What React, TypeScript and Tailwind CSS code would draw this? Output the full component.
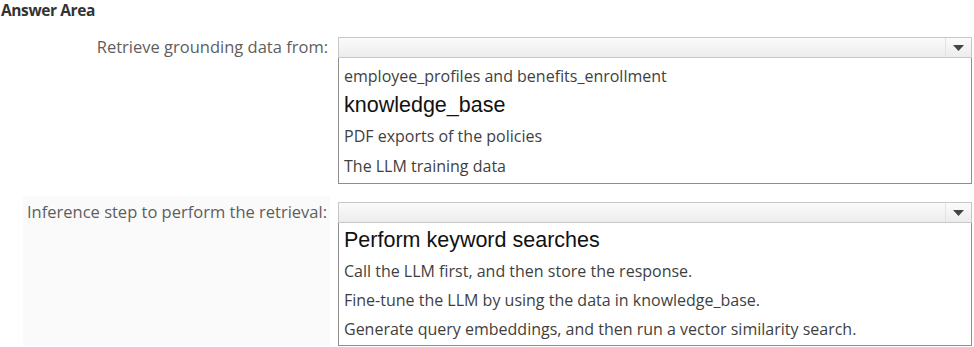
interface DropdownProps {
  items: { text: string; big?: boolean }[];
  listClass?: string;
  rowClass: string;
  bigRowClass: string;
}

function Dropdown({ items, listClass, rowClass, bigRowClass }: DropdownProps) {
  return (
    <div className="flex-1">
      <div className="flex h-[21px] border border-[#c8c8c8] bg-gradient-to-b from-[#fbfbfb] to-[#ececec]">
        <div className="flex-1" />
        <div className="flex w-[26px] items-center justify-center border-l border-[#e2e2e2]">
          <svg width="11" height="6" viewBox="0 0 11 6">
            <path d="M0 0h11L5.5 6z" fill="#444" />
          </svg>
        </div>
      </div>
      <div className={`border border-t-0 border-[#8e8e8e] bg-white pl-[5px] ${listClass ?? ""}`}>
        {items.map((item) =>
          item.big ? (
            <div
              key={item.text}
              className={`flex items-center font-['Liberation_Sans',Arial,sans-serif] text-[21.5px] leading-none text-[#111] ${bigRowClass}`}
            >
              {item.text}
            </div>
          ) : (
            <div key={item.text} className={`flex items-center text-[16px] leading-none text-[#3f3f3f] ${rowClass}`}>
              {item.text}
            </div>
          )
        )}
      </div>
    </div>
  );
}

export default function App() {
  return (
    <div className="h-[347px] w-[974px] overflow-hidden bg-white font-['Open_Sans','Noto_Sans',sans-serif]">
      <div className="h-[37px] pl-[1px] pt-[1px]">
        <div className="text-[15.5px] font-bold leading-[18px] tracking-[-0.4px] text-[#333]">Answer Area</div>
      </div>
      <div className="pr-[2px]">
        <div className="flex items-start">
          <div className="mr-[10px] flex h-[21px] w-[328px] items-center justify-end text-[16.5px] text-[#5e5e5e]">
            Retrieve grounding data from:
          </div>
          <Dropdown
            listClass="pt-[3px] pb-[2px]"
            rowClass="h-[30px]"
            bigRowClass="h-[30px]"
            items={[
              { text: "employee_profiles and benefits_enrollment" },
              { text: "knowledge_base", big: true },
              { text: "PDF exports of the policies" },
              { text: "The LLM training data" },
            ]}
          />
        </div>
        <div className="h-[12px]" />
        <div className="flex items-stretch">
          <div className="mr-[8px] ml-[23px] w-[307px] bg-[#fafafa] pt-[6px] pl-[4px]">
            <div className="flex h-[21px] items-center text-[16.5px] text-[#5e5e5e]">
              Inference step to perform the retrieval:
            </div>
          </div>
          <div className="flex flex-1 flex-col pt-[6px]">
            <Dropdown
              listClass="pt-[2px] pb-[2px]"
              rowClass="h-[29px]"
              bigRowClass="h-[31px]"
              items={[
                { text: "Perform keyword searches", big: true },
                { text: "Call the LLM first, and then store the response." },
                { text: "Fine-tune the LLM by using the data in knowledge_base." },
                { text: "Generate query embeddings, and then run a vector similarity search." },
              ]}
            />
          </div>
        </div>
      </div>
    </div>
  );
}
